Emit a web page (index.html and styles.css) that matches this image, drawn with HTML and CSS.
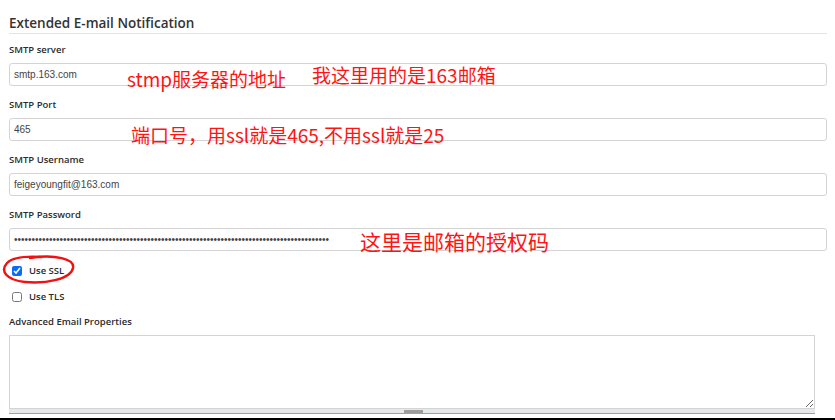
FILE: index.html
```html
<!DOCTYPE html>
<html lang="zh-CN">
<head>
<meta charset="utf-8">
<title>Extended E-mail Notification</title>
<link rel="stylesheet" href="styles.css">
</head>
<body>
<div class="page">
  <div class="section">
    <div class="section-title">Extended E-mail Notification</div>
    <div class="field">
      <label class="field-label">SMTP server</label>
      <input class="text-input" type="text" value="smtp.163.com">
    </div>
    <div class="field">
      <label class="field-label">SMTP Port</label>
      <input class="text-input" type="text" value="465">
    </div>
    <div class="field">
      <label class="field-label">SMTP Username</label>
      <input class="text-input" type="text" value="feigeyoungfit@163.com">
    </div>
    <div class="field">
      <label class="field-label">SMTP Password</label>
      <input class="text-input" type="password" value="aaaaaaaaaaaaaaaaaaaaaaaaaaaaaaaaaaaaaaaaaaaaaaaaaaaaaaaaaaaaaaaaaaaaaaaaaaaaaaaaaaaaaaaaaa">
    </div>
    <div class="check-row check-first">
      <input class="check" type="checkbox" id="ssl" checked>
      <label class="check-label" for="ssl">Use SSL</label>
    </div>
    <div class="check-row">
      <input class="check" type="checkbox" id="tls">
      <label class="check-label" for="tls">Use TLS</label>
    </div>
    <div class="field">
      <label class="field-label">Advanced Email Properties</label>
      <textarea class="text-area"></textarea>
      <div class="area-handle"><span class="area-grip"></span></div>
    </div>
  </div>
</div>
<div class="bottom-edge"></div>

<div class="note note-server">stmp服务器的地址</div>
<div class="note note-163">我这里用的是163邮箱</div>
<div class="note note-port">端口号，用ssl就是465,不用ssl就是25</div>
<div class="note note-auth">这里是邮箱的授权码</div>
<svg class="ring" width="80" height="34" viewBox="0 250 80 34" xmlns="http://www.w3.org/2000/svg">
  <path d="M30 258 C55 254 75 259 73 268 C71 279 46 284 25 282 C6 280 0 271 7 263 C13 257 27 256 42 257" fill="none" stroke="#f21010" stroke-width="2.4" stroke-linecap="round"/>
</svg>
</body>
</html>
```

FILE: styles.css
```css
html, body {
  margin: 0;
  padding: 0;
  background: #ffffff;
}
body {
  position: relative;
  width: 835px;
  height: 420px;
  overflow: hidden;
  font-family: "Liberation Sans", Arial, sans-serif;
  color: #333333;
}
.page {
  padding: 0 8px 0 9px;
}
.section {
  display: flex;
  flex-direction: column;
}
.section-title {
  padding-top: 14px;
  padding-bottom: 1px;
  line-height: 18px;
  font-family: "Open Sans", sans-serif;
  font-size: 13.5px;
  font-weight: 600;
  color: #333333;
  border-bottom: 1px solid #e3e3e3;
  margin-bottom: 9px;
}
.field {
  display: flex;
  flex-direction: column;
  margin-bottom: 12px;
}
.field-label {
  font-family: "Open Sans", sans-serif;
  font-size: 9.5px;
  line-height: 14px;
  font-weight: 600;
  color: #2b2b2b;
  margin-bottom: 6px;
}
.text-input {
  box-sizing: border-box;
  width: 100%;
  height: 23px;
  margin: 0;
  padding: 0 4px;
  border: 1px solid #d4d4d4;
  border-radius: 3px;
  font-family: "Liberation Sans", Arial, sans-serif;
  font-size: 10px;
  color: #444444;
  background: #ffffff;
  outline: none;
}
.check-row {
  display: flex;
  align-items: center;
  height: 26px;
  padding-left: 3px;
}
.check-first {
  margin-top: -5px;
}
.check-row + .field {
  margin-top: 5px;
}
.check {
  width: 10px;
  height: 10px;
  margin: 0 7px 0 0;
  accent-color: #0a6cf5;
}
.check-label {
  font-family: "Open Sans", sans-serif;
  font-size: 9.5px;
  line-height: 14px;
  font-weight: 600;
  color: #2b2b2b;
}
.text-area {
  box-sizing: border-box;
  display: block;
  width: 806px;
  height: 74px;
  margin: 0;
  border: 1px solid #d4d4d4;
  border-radius: 0;
  resize: vertical;
  font-family: "Liberation Sans", Arial, sans-serif;
  font-size: 10px;
  outline: none;
}
.area-handle {
  box-sizing: border-box;
  width: 806px;
  height: 5px;
  background: #e4e9eb;
  border-bottom: 1px solid #9aa3a6;
  display: flex;
  justify-content: center;
  align-items: flex-end;
}
.area-grip {
  display: block;
  width: 19px;
  height: 3px;
  margin-left: 3px;
  background: #9c9c9c;
}
.bottom-edge {
  position: absolute;
  left: 0;
  top: 418px;
  width: 835px;
  height: 2px;
  background: #000000;
}
.note {
  position: absolute;
  font-family: "Noto Sans CJK SC", sans-serif;
  font-size: 19px;
  line-height: 19px;
  color: #ff1414;
  white-space: nowrap;
}
.note-server { left: 127px; top: 69px; }
.note-163 { left: 312px; top: 65px; }
.note-port { left: 131px; top: 125px; }
.note-auth { left: 360px; top: 231px; font-size: 21px; line-height: 21px; }
.ring {
  position: absolute;
  left: 0;
  top: 250px;
}
```
